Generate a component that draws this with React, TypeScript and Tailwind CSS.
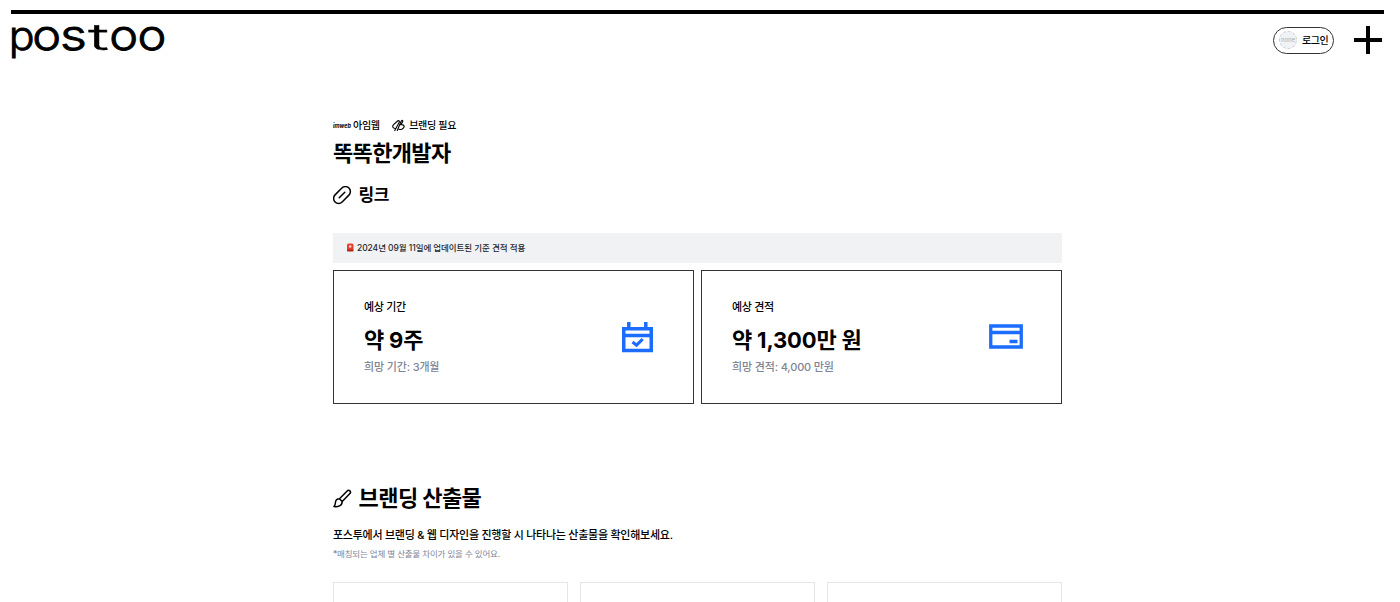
import type { ReactNode } from 'react';

const outputs = ['brand', 'design', 'web'];

const estimates = [
  {
    title: '예상 기간',
    value: '약 9주',
    hope: '희망 기간: 3개월',
    icon: <CalendarIcon />,
  },
  {
    title: '예상 견적',
    value: '약 1,300만 원',
    hope: '희망 견적: 4,000 만원',
    icon: <CardIcon />,
  },
];

function Logo() {
  return (
    <svg width="156" height="38" viewBox="0 0 156 38" className="overflow-visible" fontFamily="Inter, sans-serif" fontWeight="300" fontSize="42" stroke="#000" strokeWidth="0.9">
      <text transform="translate(-2.200 25.900) scale(1.02 0.950)">p</text>
      <text transform="translate(21.200 25.900) scale(1.160 1.010)">o</text>
      <text transform="translate(48.900 25.900) scale(1.240 1.010)">s</text>
      <text transform="translate(76.900 25.900) scale(1.680 0.880)" strokeWidth="0.3">t</text>
      <text transform="translate(98.200 25.900) scale(1.160 1.010)">o</text>
      <text transform="translate(126.400 25.900) scale(1.160 1.010)">o</text>
    </svg>
  );
}

function PlusIcon() {
  return (
    <svg width="28" height="28" viewBox="0 0 28 28" fill="none" stroke="#000" strokeWidth="4">
      <path d="M14 0v28M0 14h28" />
    </svg>
  );
}

function BrandingIcon() {
  return (
    <svg width="13" height="13" viewBox="0 0 13 13" fill="none" stroke="#000" strokeWidth="1.1" strokeLinecap="round" strokeLinejoin="round">
      <path d="M3.500 9.500C.8 9.700 0 7.500 1.600 5.700L5 2.500c1.600-1.600 3-.6 2.200.8L2.800 11.600M5.300 11.500l3.800-9.200c.9-1.800 2.300-.8 1.500.6L8.800 5.700c3.200-.4 4.100 1.600 2.500 3.400-1.300 1.500-2.900 1.700-4.300 1.100" />
    </svg>
  );
}

function LinkIcon() {
  return (
    <svg width="19" height="19" viewBox="0 0 19 19" className="-mt-px" fill="none" stroke="#000" strokeWidth="1.5" strokeLinecap="round">
      <rect x="-0.800" y="4" width="19.600" height="10" rx="5" transform="rotate(-45 9 9)" />
      <path d="M6.200 11.800l5.600-5.600" />
    </svg>
  );
}

function BrushIcon() {
  return (
    <svg width="19" height="19" viewBox="0 0 19 19" fill="none" stroke="#000" strokeWidth="1.5" strokeLinecap="round" strokeLinejoin="round">
      <path d="M6.500 9.800L14.200 1.900a1.800 1.800 0 0 1 2.700 2.600L9.200 12.600M6.500 9.800c-2.500 0-4 1.500-4.100 4 0 1.600-.4 2.700-1.400 3.800 4 .5 8-.6 8.200-5zM6.500 9.800l2.700 2.800" />
    </svg>
  );
}

function SirenIcon() {
  return (
    <svg width="8" height="9" viewBox="0 0 8 9" className="-mt-px">
      <rect x="1" y="0.500" width="6.500" height="7.500" rx="1.500" fill="#e8402f" />
      <rect x="1" y="6.500" width="6.500" height="2" rx="0.800" fill="#b3261c" />
      <path d="M3 2.500h2.300v2H3z" fill="#ffe3dc" />
    </svg>
  );
}

function CalendarIcon() {
  return (
    <svg width="31" height="31" viewBox="0 0 31 31" className="mr-[2px]" fill="none" stroke="#1b6cff">
      <path d="M1.750 6.750h27.500v21.800h-27.500zM1.750 13.500h27.500M6.800 0v6M23.800 0v6" strokeWidth="3.500" />
      <path d="M10.500 20l4 3.200 6.200-6" strokeWidth="3" />
    </svg>
  );
}

function CardIcon() {
  return (
    <svg width="34" height="25" viewBox="0 0 34 25" className="-mt-px" fill="none" stroke="#1b6cff">
      <path d="M1.750 2h30.500v21h-30.500zM1.750 8.500h30.500" strokeWidth="3.300" />
      <path d="M20.500 17.500h8" strokeWidth="3.500" />
    </svg>
  );
}

function Tag({ icon, children }: { icon: ReactNode; children: ReactNode }) {
  return (
    <div className="flex items-center">
      {icon}
      <span className="text-[10px] font-medium leading-4 tracking-[-0.3px]">{children}</span>
    </div>
  );
}

export default function App() {
  return (
    <div className="h-[602px] overflow-hidden bg-white text-black font-['Inter','Noto_Sans_CJK_KR',sans-serif]">
      {/* Header */}
      <header className="ml-[11px] mr-4 h-[62px] pt-[10px]">
        <div className="h-[4px] bg-black" />
        <div className="flex items-start justify-between">
          <div className="pt-[10px]">
            <Logo />
          </div>
          <div className="flex items-center gap-5 pr-[2px] pt-3">
            <button className="flex h-[27px] w-[61px] items-center gap-[5px] rounded-full border border-[#333] pl-[5px]">
              <span className="flex h-[18px] w-[18px] shrink-0 items-center justify-center rounded-full border border-dashed border-[#c8cad2] bg-[#f1f2f4] text-[6px] leading-none text-[#a9adb9]">
                none
              </span>
              <span className="whitespace-nowrap text-[10px] font-medium tracking-[-0.4px]">로그인</span>
            </button>
            <PlusIcon />
          </div>
        </div>
      </header>

      <main className="ml-[333px] w-[729px] pt-[55px]">
        <div className="flex h-4 items-center gap-[12.500px]">
          <Tag
            icon={
              <svg width="20" height="10" viewBox="0 0 20 10">
                <text x="0" y="7.500" fontSize="6.500" fontStyle="italic" fontWeight="700" textLength="18" lengthAdjust="spacingAndGlyphs">
                  imweb
                </text>
              </svg>
            }
          >
            아임웹
          </Tag>
          <Tag icon={<span className="mr-1"><BrandingIcon /></span>}>브랜딩 필요</Tag>
        </div>
        <h1 className="mt-[4px] text-[22px] font-bold leading-8 tracking-[-0.65px]">똑똑한개발자</h1>
        <div className="mt-[13px] flex h-7 items-center gap-[6.500px]">
          <LinkIcon />
          <h2 className="text-[17px] font-semibold tracking-[-0.4px]">링크</h2>
        </div>

        {/* Estimates */}
        <div className="mt-[23px] flex h-[30px] items-center gap-[3px] bg-[#f1f2f4] pl-[13px] text-[#25262b]">
          <SirenIcon />
          <p className="text-[8.500px] font-medium tracking-[-0.07px]">2024년 09월 11일에 업데이트된 기준 견적 적용</p>
        </div>
        <div className="mt-[7px] grid grid-cols-2 gap-[7px]">
          {estimates.map((item) => (
            <section key={item.title} className="flex h-[134px] items-center justify-between border border-[#333] pl-[30px] pr-[38.500px]">
              <div>
                <h3 className="text-[11px] font-medium leading-4 tracking-[-0.3px]">{item.title}</h3>
                <p className="mt-[9px] text-[22px] font-bold leading-8 tracking-[-0.18px]">{item.value}</p>
                <p className="mt-[3px] text-[11px] font-medium leading-4 tracking-[-0.15px] text-[#808495]">{item.hope}</p>
              </div>
              {item.icon}
            </section>
          ))}
        </div>

        {/* Branding outputs */}
        <div className="mt-[78px] flex h-8 items-center gap-[6.500px]">
          <BrushIcon />
          <h2 className="text-[22px] font-bold tracking-[-0.55px]">브랜딩 산출물</h2>
        </div>
        <p className="mt-[13px] text-[11px] font-medium leading-4 tracking-[-0.26px]">
          포스투에서 브랜딩 &amp; 웹 디자인을 진행할 시 나타나는 산출물을 확인해보세요.
        </p>
        <p className="mt-[3px] text-[8.500px] leading-4 tracking-[-0.18px] text-[#808495]">*매칭되는 업체 별 산출물 차이가 있을 수 있어요.</p>
        <div className="mt-5 grid grid-cols-3 gap-3">
          {outputs.map((output) => (
            <div key={output} className="h-[160px] border border-[#e5e6ea]" />
          ))}
        </div>
      </main>
    </div>
  );
}
